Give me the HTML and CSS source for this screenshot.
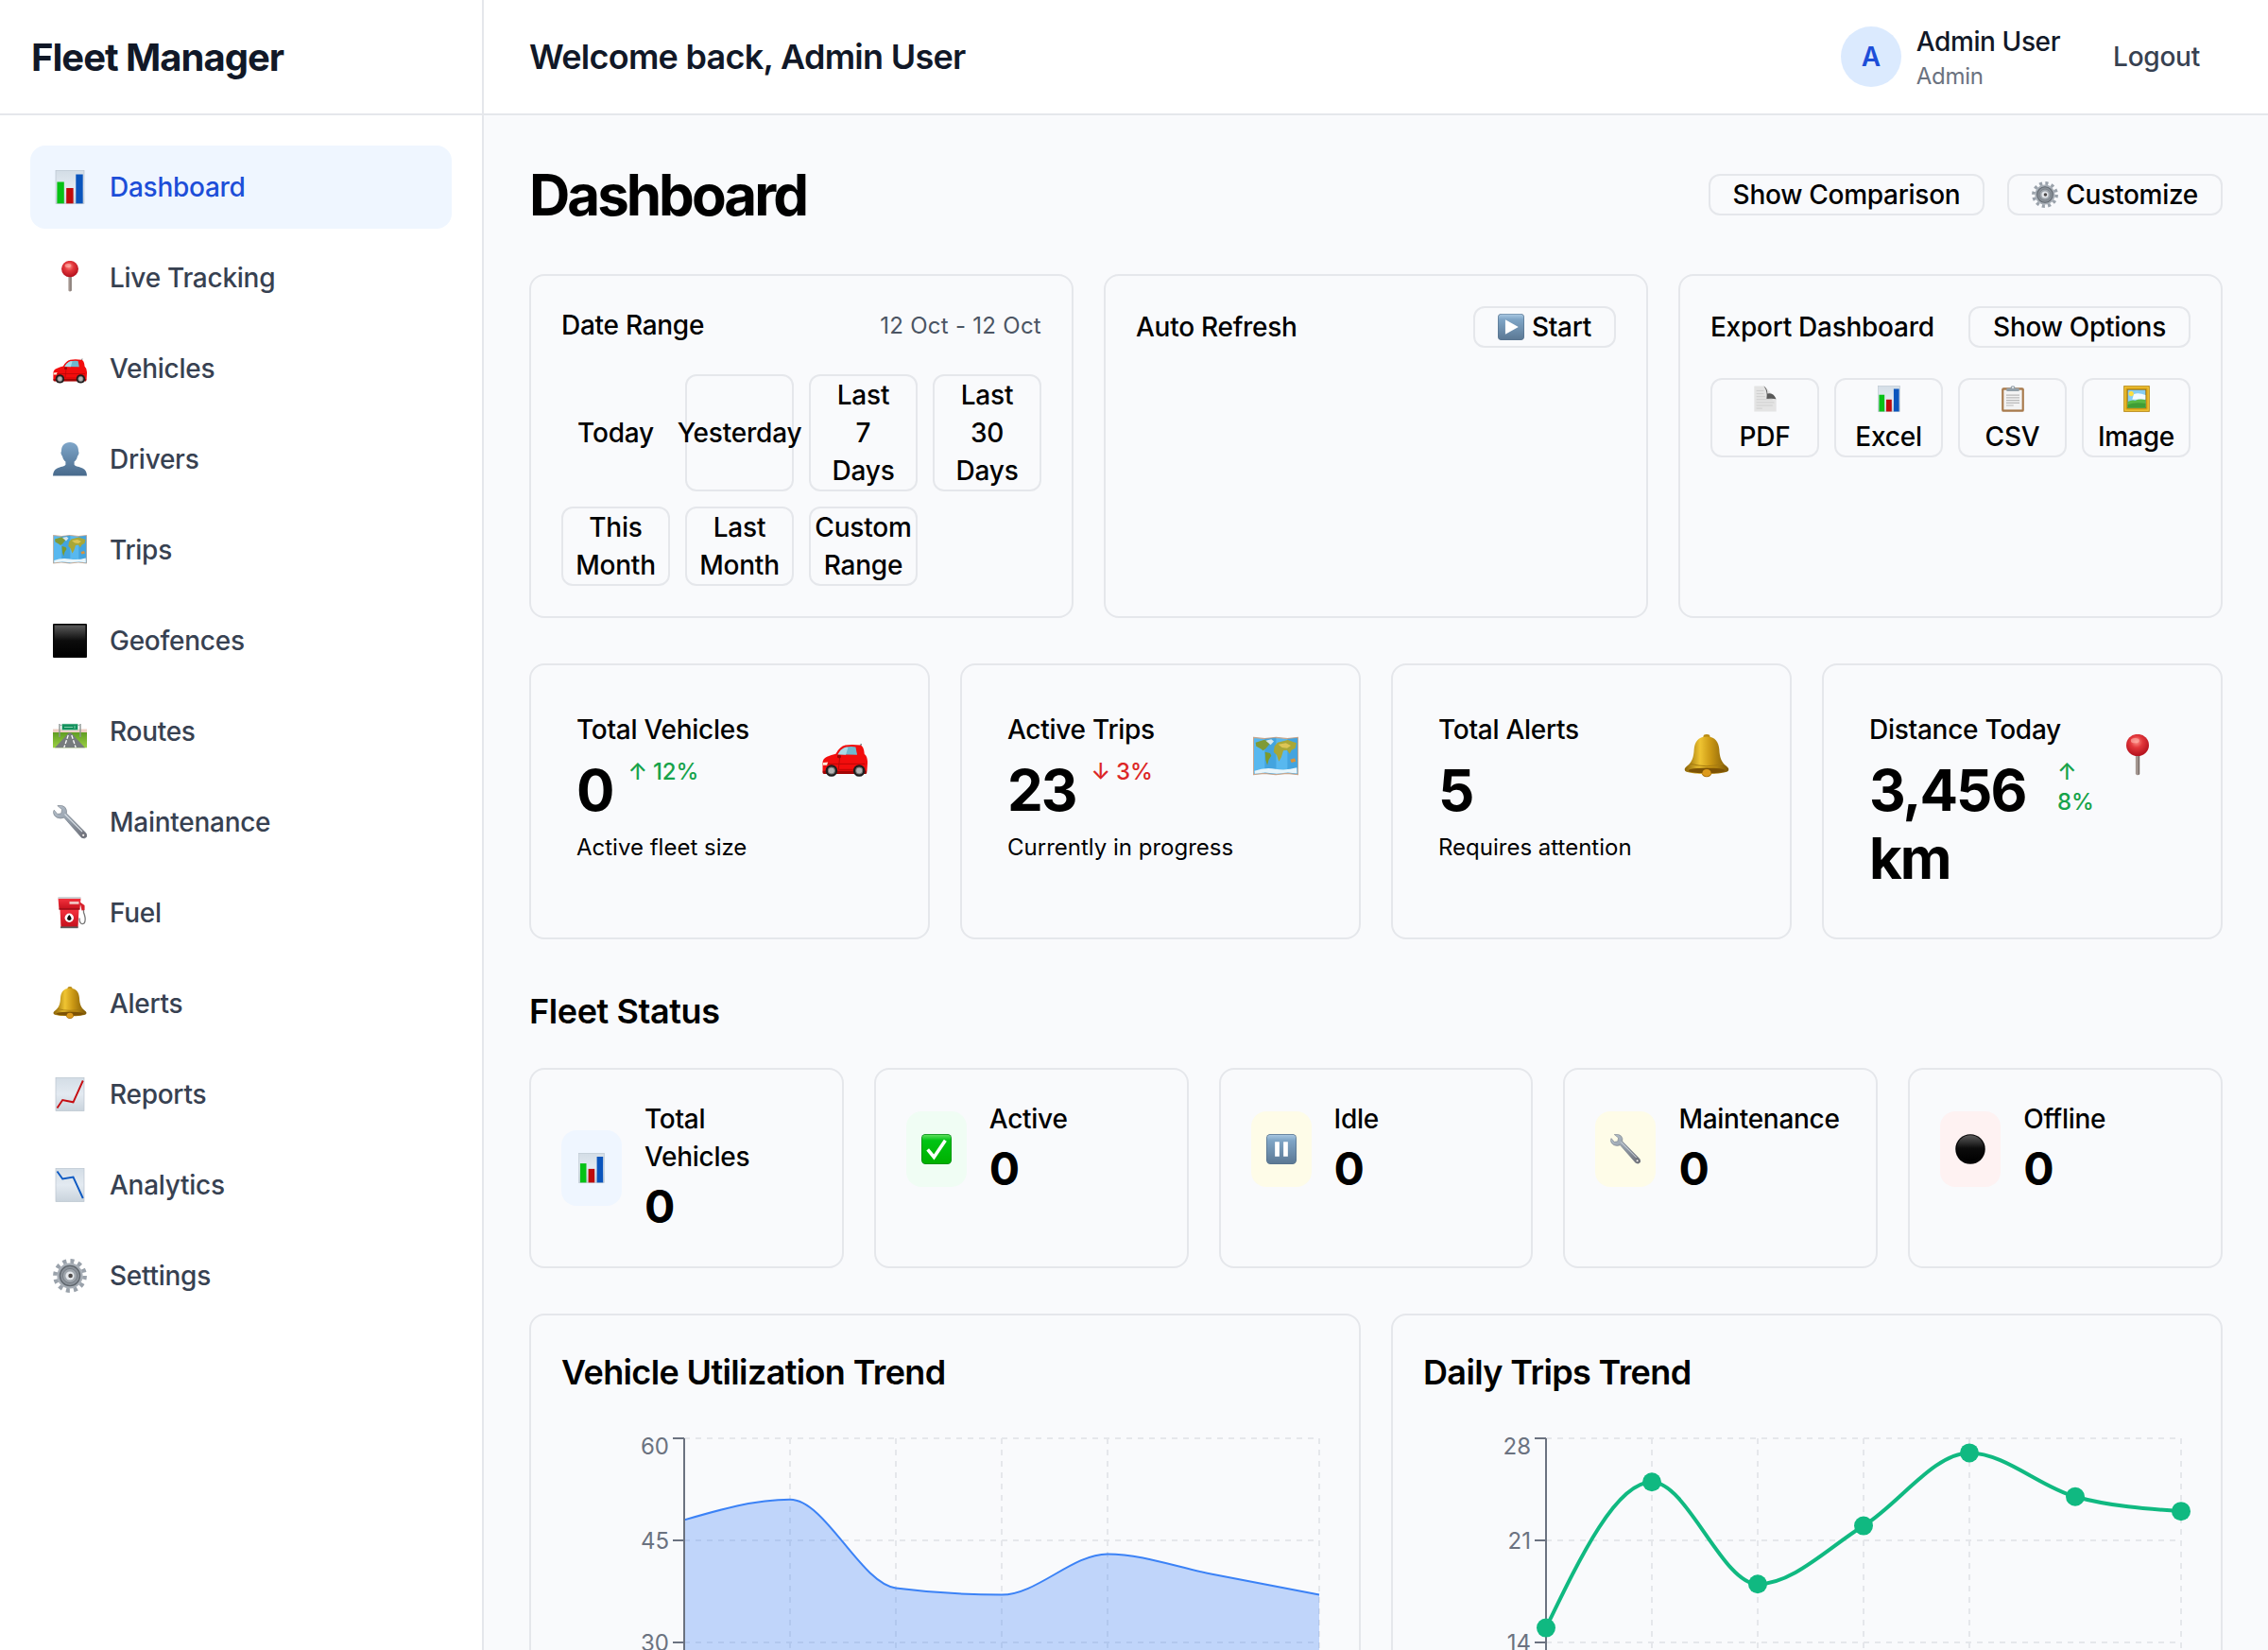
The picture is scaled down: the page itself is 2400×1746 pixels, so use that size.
FILE: index.html
```html
<!DOCTYPE html>
<html lang="en">
<head>
<meta charset="utf-8">
<title>Fleet Manager</title>
<link rel="stylesheet" href="styles.css">
</head>
<body>
<svg class="defs" width="0" height="0" aria-hidden="true">
  <defs>
    <linearGradient id="paper" x1="0" y1="0" x2="0" y2="1"><stop offset="0" stop-color="#d3dde6"/><stop offset=".5" stop-color="#e3eaf1"/><stop offset="1" stop-color="#c9d3dc"/></linearGradient>
    <linearGradient id="steel" x1="0" y1="0" x2="0" y2="1"><stop offset="0" stop-color="#a9c8e2"/><stop offset=".2" stop-color="#7fa5c6"/><stop offset="1" stop-color="#5b7894"/></linearGradient>
    <linearGradient id="person" x1="0" y1="0" x2="0" y2="1"><stop offset="0" stop-color="#7fa6c9"/><stop offset="1" stop-color="#486a8c"/></linearGradient>
    <linearGradient id="ink" x1="0" y1="0" x2="0" y2="1"><stop offset="0" stop-color="#5a5a5a"/><stop offset=".5" stop-color="#0c0c0c"/><stop offset="1" stop-color="#000"/></linearGradient>
    <linearGradient id="gold" x1="0" y1="0" x2="1" y2="0"><stop offset="0" stop-color="#8a6206"/><stop offset=".35" stop-color="#efc432"/><stop offset=".6" stop-color="#c99613"/><stop offset="1" stop-color="#7a5606"/></linearGradient>
    <linearGradient id="metal" x1="0" y1="0" x2="1" y2="1"><stop offset="0" stop-color="#b9c4cf"/><stop offset=".5" stop-color="#8e98a4"/><stop offset="1" stop-color="#6b6b74"/></linearGradient>
    <linearGradient id="green" x1="0" y1="0" x2="0" y2="1"><stop offset="0" stop-color="#5fe05f"/><stop offset=".2" stop-color="#00c414"/><stop offset="1" stop-color="#00b000"/></linearGradient>
    <linearGradient id="redbody" x1="0" y1="0" x2="0" y2="1"><stop offset="0" stop-color="#f5333f"/><stop offset="1" stop-color="#c30f1b"/></linearGradient>
    <radialGradient id="redball" cx=".45" cy=".35" r=".6"><stop offset="0" stop-color="#ff9088"/><stop offset=".45" stop-color="#e2373b"/><stop offset="1" stop-color="#b81420"/></radialGradient>
    <linearGradient id="grass" x1="0" y1="0" x2="0" y2="1"><stop offset="0" stop-color="#5f9d22"/><stop offset="1" stop-color="#9cd043"/></linearGradient>
  </defs>
  <symbol id="e-chart" viewBox="0 0 36 36">
    <rect x="3" y=".3" width="30" height="35.2" fill="url(#paper)" stroke="#b9c4ce" stroke-width=".7"/>
    <rect x="4.4" y="12.5" width="7.4" height="22.8" fill="#06c215"/><rect x="14.2" y="19" width="7.4" height="16.3" fill="#c00a0a"/><rect x="24.3" y="4.5" width="7.4" height="30.8" fill="#0a55bd"/>
  </symbol>
  <symbol id="e-pin" viewBox="0 0 36 36">
    <path d="M16.4 14h3.2v17.5q-1.6 2-3.2 0z" fill="#a39690"/><path d="M18.6 16h1v15.6l-1 .6z" fill="#766a66"/>
    <ellipse cx="18" cy="8.6" rx="9" ry="8.7" fill="url(#redball)"/><ellipse cx="16" cy="5" rx="3.4" ry="2" fill="#ffb4ac" opacity=".6"/>
  </symbol>
  <symbol id="e-car" viewBox="0 -1.5 36 36">
    <path d="M30 10l1-4" stroke="#555" stroke-width=".8"/>
    <path d="M.4 23q-.6-5 3.4-6.6 3.600-1.600 7-2.400 3.200-5.800 7.600-6.800 5-1 12 0 2.600.6 3.200 7 2.600 2 2.400 7.400l-.4 6q-.2 1.600-2 1.800L3 29.800q-2.400-.2-2.600-2.400z" fill="#f20d0d"/>
    <path d="M12.400 14.400q2.800-4.600 6.200-5.600 4-.8 8-.2l1.200 6.200z" fill="#6fb9cf"/><path d="M12.400 14.400q2.800-4.600 6.200-5.600h2l-1.800 6z" fill="#a9dbe6"/>
    <path d="M1 22h33M14 16.500l-1 10h13.500" stroke="#b80606" stroke-width=".7" fill="none"/>
    <path d="M.6 21l4-.4-.8 2.400H.6z" fill="#fbe9d8"/><path d="M.4 27.600h35v1.400q0 1-1 1H1.600q-1 0-1.200-1z" fill="#a40404"/>
    <rect x="12" y="15" width="3" height="2.400" rx="1" fill="#9c0505"/>
    <g fill="#1e1e1e"><circle cx="7.400" cy="27.400" r="4.700"/><circle cx="29.400" cy="27.400" r="4.700"/></g>
    <g fill="#b4b4b4" stroke="#777" stroke-width=".8"><circle cx="7.400" cy="27.400" r="2.600"/><circle cx="29.400" cy="27.400" r="2.600"/></g>
  </symbol>
  <symbol id="e-person" viewBox="0 0 36 36">
    <path d="M18 0c5.600 0 9 3.600 9 9 0 1 .8 1.400.4 3-.3 1.600-1.200 2-1.600 3.400-.6 2.400-1.800 3.800-3.200 5.200v3.200c1.400 2 5.400 2.200 8.800 3.600 3 1.300 4.400 3.800 4.600 8.200H0c.2-4.400 1.600-6.900 4.600-8.200 3.400-1.400 7.400-1.600 8.800-3.600v-3.200c-1.400-1.400-2.600-2.800-3.200-5.200-.4-1.400-1.300-1.800-1.600-3.400-.4-1.600.4-2 .4-3 0-5.400 3.400-9 9-9z" fill="url(#person)"/>
  </symbol>
  <symbol id="e-map" viewBox="0 0 36 36">
    <path d="M.3 2.500l9 1 9-1 9 1 8.400-1 .1 29.500-8.800-1-9 1-9-1-8.800 1z" fill="#58b8ef" stroke="#c9a68c" stroke-width=".9"/>
    <path d="M9.300 3.600l9-1V31.700l-9-1zM27.300 3.600l8-.7V31.500l-8-.9z" fill="#2e8fd0" opacity=".5"/>
    <path d="M1.200 29q8-3 16.500-1.500t17-1l.2 4.700-7.500-.8-9 .9-9-.9-8 .9z" fill="#e8f5fb"/>
    <path d="M2 6.500l6.500-2 5.500 1-1.500 3-2.500 3-2 1.500-2-1.500-3.500-2z" fill="#7f9a36"/><path d="M10 5l4.500-1 2 1.600-2.500 2.900z" fill="#d5e6ec"/>
    <path d="M9.500 14l4 1 1 2-2 3-1.200 4.500-1.300-4z" fill="#7c9a2c"/>
    <path d="M17 9.500l2.500-3 8-2 7 2.500-1 4-3 1.500-1.500 3-2-3-3 .5-1.500 5-2 3.500-1.700-5-2.500-2.500z" fill="#a8a737"/><path d="M20 8l6-1 4 2-3 2-4-.5z" fill="#dcc555"/><path d="M29.500 20l3.500-1 1 2.500-3.500 1z" fill="#d9933a"/>
  </symbol>
  <symbol id="e-square" viewBox="0 0 36 36">
    <rect width="36" height="36" rx="1" fill="#080808"/><rect x="1.600" y="1.600" width="32.800" height="32.800" fill="url(#ink)"/>
  </symbol>
  <symbol id="e-road" viewBox="0 0 36 36">
    <rect y="15.500" width="36" height="5" fill="#eecfc4"/><rect y="19" width="36" height="16.300" fill="url(#grass)"/>
    <path d="M16.800 19.500h2.400L34 35.300H2z" fill="#777b7d"/><path d="M16.200 22l-1 3-3.400 10M19.800 22l1 3 3.400 10" stroke="#fff" stroke-width="1.300" stroke-dasharray="4 1.500" fill="none"/>
    <path d="M7 10v14M29 10v14" stroke="#8c9592" stroke-width="1.400"/><path d="M7 11.500h22" stroke="#a9b2af" stroke-width="1"/>
    <rect x="9.500" y="10" width="17" height="6.600" rx=".6" fill="#12915d" stroke="#bfe3d2" stroke-width=".6"/><path d="M12 13.500h9M23 12v3" stroke="#8fd3b4" stroke-width=".9"/>
  </symbol>
  <symbol id="e-wrench" viewBox="0 0 36 36">
    <path d="M4.800.6q5-1.400 8 1.600 2.400 2.600 1.600 6.600L34 28.600q2.800 2.600 1.600 5-2 2.600-5.400.6L11.800 13.200q-3.600 1.600-7.400 0Q.6 11.400.4 7.400l.8-2.200 3.600 4.200 4-.6.800-4.200z" fill="url(#metal)" stroke="#6f7781" stroke-width=".6"/>
    <path d="M12.500 9.500L31 28" stroke="#d9dfe5" stroke-width="1.100"/><circle cx="32.200" cy="31.800" r="1.500" fill="#f4f4f4" stroke="#55555c" stroke-width=".6"/>
  </symbol>
  <symbol id="e-fuel" viewBox="0 0 36 36">
    <path d="M28.500 8l4 3.500v6q2.400 6 1.400 9.500-.8 3.400-3.500 2.500-2.500-1-2.300-6" fill="none" stroke="#777" stroke-width="1.300"/><path d="M28.500 6.500l5 3.500v5l-3 .5z" fill="#d81f2a"/>
    <path d="M7.500 14h20l-1 19.500H8.500z" fill="url(#redbody)"/><path d="M5.500 2.500h24l-1 12h-22z" fill="url(#redbody)"/>
    <path d="M5.500 1h24v2h-24z" fill="#cfd2d4"/><rect x="17.500" y="6" width="10" height="2.800" fill="#f0c2c0"/><path d="M6.500 14h22" stroke="#7e0a12" stroke-width=".9"/><rect x="8" y="32.400" width="18.600" height="1.800" fill="#5b5b5b"/>
    <circle cx="17.300" cy="23.300" r="4.700" fill="#fff"/><path d="M17.300 20q3 3.300 2 5-2 2-4 0-1-1.700 2-5z" fill="#111"/>
  </symbol>
  <symbol id="e-bell" viewBox="0 0 36 36">
    <ellipse cx="18" cy="1.700" rx="2.600" ry="1.700" fill="#b88a12"/><path d="M13.500 30h9q-1 4-4.500 4t-4.500-4z" fill="#a86f0b"/>
    <path d="M18 1.800c7 0 9.600 4.600 10 10.200.3 6 1.500 10 5.500 13.200 2 1.600 2.400 2.400 1.600 3.800-1.200 1.400-8 2.400-17.100 2.400S2.100 30.400.9 29c-.8-1.400-.4-2.200 1.600-3.800C6.500 22 7.700 18 8 12 8.400 6.400 11 1.800 18 1.800z" fill="url(#gold)"/>
    <ellipse cx="18" cy="28.800" rx="14.500" ry="2.200" fill="#7d5204"/><ellipse cx="18" cy="30.500" rx="3.400" ry="2.800" fill="#dd9a1c"/><path d="M5 23.500q13 3.600 26 0" stroke="#a67a10" fill="none" stroke-width=".8"/>
  </symbol>
  <symbol id="e-up" viewBox="0 0 36 36">
    <rect x="3" y=".3" width="30" height="35.200" fill="url(#paper)" stroke="#b9c4ce" stroke-width=".7"/>
    <path d="M4.500 32.500l5.700-8.500 11.300 2.300L31.800 3.500" stroke="#c60e12" stroke-width="1.900" fill="none"/>
  </symbol>
  <symbol id="e-down" viewBox="0 0 36 36">
    <rect x="3" y=".3" width="30" height="35.200" fill="url(#paper)" stroke="#b9c4ce" stroke-width=".7"/>
    <path d="M4.500 3.500l5.700 8 11.300-2L31.800 32" stroke="#0d59c2" stroke-width="1.900" fill="none"/>
  </symbol>
  <symbol id="e-gear" viewBox="0 0 36 36">
    <circle cx="18" cy="18" r="15.600" fill="none" stroke="#9aa2ab" stroke-width="4.600" stroke-dasharray="4 4.168"/>
    <circle cx="18" cy="18" r="13.600" fill="#a6adb5"/><circle cx="18" cy="18" r="10.600" fill="#8b929a" stroke="#5f666d" stroke-width="1.300"/><circle cx="18" cy="18" r="7.600" fill="#9ea5ac" stroke="#70767d" stroke-width=".8"/>
    <circle cx="18" cy="18" r="4.600" fill="#e4e8ec"/><circle cx="18.600" cy="18" r="2.300" fill="#4d4a4a"/>
  </symbol>
  <symbol id="e-play" viewBox="0 0 36 36">
    <rect width="36" height="36" rx="5" fill="#55718c"/><rect x=".8" y=".8" width="34.400" height="34.400" rx="4.500" fill="url(#steel)"/><path d="M10.200 8v20L28 18z" fill="#fff"/>
  </symbol>
  <symbol id="e-pause" viewBox="0 0 36 36">
    <rect width="36" height="36" rx="5" fill="#55718c"/><rect x=".8" y=".8" width="34.400" height="34.400" rx="4.500" fill="url(#steel)"/><path d="M10.300 9.300h5.300v17.400h-5.300zM20.400 9.300h5.300v17.400h-5.300z" fill="#fff"/>
  </symbol>
  <symbol id="e-check" viewBox="0 0 36 36">
    <rect width="36" height="36" rx="5" fill="#058a16"/><rect x=".8" y=".8" width="34.400" height="34.400" rx="4.500" fill="url(#green)"/><path d="M7.500 18.500l7.500 9L28.500 7.500" fill="none" stroke="#fff" stroke-width="4"/>
  </symbol>
  <symbol id="e-circle" viewBox="0 0 36 36">
    <circle cx="18" cy="18" r="17.700" fill="#050505"/><ellipse cx="18" cy="17" rx="16" ry="15.500" fill="url(#ink)"/>
  </symbol>
  <symbol id="e-doc" viewBox="0 0 36 36">
    <path d="M3 .5h14l16 17.500v17.500H3z" fill="#e4e4e4"/><path d="M6 7h10M6 11h10M6 15h12M6 19h22M6 23h24M6 27h22M6 31h8" stroke="#c9c9c9" stroke-width="1"/>
    <path d="M16 .5q5 3 5 10.500 8-2.500 11.800 7.400-5-1.400-13-.4Q21.500 8 16 .5z" fill="#595959"/>
  </symbol>
  <symbol id="e-clip" viewBox="0 0 36 36">
    <rect x="2.800" y="3" width="30.400" height="32.700" rx="2.400" fill="#a87a4c"/><rect x="5.600" y="6" width="24.800" height="26.700" fill="#f3f3f3"/>
    <path d="M9 13h18M9 16.500h18M9 20h18M9 23.500h18M9 27h10" stroke="#b9b9b9" stroke-width="1.600"/><path d="M9.500 3.500h5Q15 .3 18 .3t3.500 3.200h5v4.200h-17z" fill="#93a0a9"/><circle cx="18" cy="2.800" r="1.200" fill="#f9fafc"/>
  </symbol>
  <symbol id="e-picture" viewBox="0 0 36 36">
    <rect x=".4" y=".4" width="35.200" height="35.200" rx="1" fill="#d9a213" stroke="#9a6e08" stroke-width=".7"/><rect x="2.400" y="2.400" width="31.200" height="31.200" fill="none" stroke="#f5cf4a" stroke-width="1.200"/>
    <rect x="5.400" y="5.400" width="25.200" height="25.200" fill="#86cdf2" stroke="#8a6208" stroke-width=".9"/><path d="M14 12q6-3 16 1v6H12z" fill="#f3fafd"/><circle cx="10.500" cy="11" r="3.400" fill="#ffdf3c"/>
    <path d="M5.900 22q6-3 10-1.500 6-3 14.200-1v10.600H5.900z" fill="#58b944"/><path d="M5.900 26q10-4 24.200-1.500v5.600H5.900z" fill="#3f9e36"/>
  </symbol>
</svg>

<div class="app">
  <aside class="sidebar">
    <div class="brand"><span class="brand-name">Fleet Manager</span></div>
    <nav class="nav">
      <a class="nav-item active"><svg class="ico"><use href="#e-chart"/></svg><span>Dashboard</span></a>
      <a class="nav-item"><svg class="ico"><use href="#e-pin"/></svg><span>Live Tracking</span></a>
      <a class="nav-item"><svg class="ico"><use href="#e-car"/></svg><span>Vehicles</span></a>
      <a class="nav-item"><svg class="ico"><use href="#e-person"/></svg><span>Drivers</span></a>
      <a class="nav-item"><svg class="ico"><use href="#e-map"/></svg><span>Trips</span></a>
      <a class="nav-item"><svg class="ico"><use href="#e-square"/></svg><span>Geofences</span></a>
      <a class="nav-item"><svg class="ico"><use href="#e-road"/></svg><span>Routes</span></a>
      <a class="nav-item"><svg class="ico"><use href="#e-wrench"/></svg><span>Maintenance</span></a>
      <a class="nav-item"><svg class="ico"><use href="#e-fuel"/></svg><span>Fuel</span></a>
      <a class="nav-item"><svg class="ico"><use href="#e-bell"/></svg><span>Alerts</span></a>
      <a class="nav-item"><svg class="ico"><use href="#e-up"/></svg><span>Reports</span></a>
      <a class="nav-item"><svg class="ico"><use href="#e-down"/></svg><span>Analytics</span></a>
      <a class="nav-item"><svg class="ico"><use href="#e-gear"/></svg><span>Settings</span></a>
    </nav>
  </aside>

  <div class="page">
    <header class="topbar">
      <h2 class="welcome">Welcome back, Admin User</h2>
      <div class="account">
        <div class="user">
          <div class="avatar">A</div>
          <div><div class="user-name">Admin User</div><div class="user-role">Admin</div></div>
        </div>
        <button class="logout">Logout</button>
      </div>
    </header>

    <main class="content">
      <div class="title-row">
        <h1 class="title">Dashboard</h1>
        <div class="actions">
          <button class="btn">Show Comparison</button>
          <button class="btn"><svg class="ico-sm"><use href="#e-gear"/></svg>Customize</button>
        </div>
      </div>

      <section class="grid grid-3">
        <div class="card">
          <div class="card-head"><span class="label">Date Range</span><span class="range">12 Oct - 12 Oct</span></div>
          <div class="tiles">
            <button class="tile selected">Today</button>
            <button class="tile">Yesterday</button>
            <button class="tile">Last<br>7<br>Days</button>
            <button class="tile">Last<br>30<br>Days</button>
            <button class="tile">This<br>Month</button>
            <button class="tile">Last<br>Month</button>
            <button class="tile">Custom<br>Range</button>
          </div>
        </div>
        <div class="card">
          <div class="card-head"><span class="label">Auto Refresh</span><button class="btn"><svg class="ico-sm"><use href="#e-play"/></svg>Start</button></div>
        </div>
        <div class="card">
          <div class="card-head"><span class="label">Export Dashboard</span><button class="btn">Show Options</button></div>
          <div class="tiles">
            <button class="tile"><span class="tile-ico"><svg class="ico-sm"><use href="#e-doc"/></svg></span>PDF</button>
            <button class="tile"><span class="tile-ico"><svg class="ico-sm"><use href="#e-chart"/></svg></span>Excel</button>
            <button class="tile"><span class="tile-ico"><svg class="ico-sm"><use href="#e-clip"/></svg></span>CSV</button>
            <button class="tile"><span class="tile-ico"><svg class="ico-sm"><use href="#e-picture"/></svg></span>Image</button>
          </div>
        </div>
      </section>

      <section class="grid grid-4">
        <div class="card kpi">
          <div><div class="label">Total Vehicles</div>
            <div class="kpi-line"><span class="value">0</span><span class="trend up">↑ 12%</span></div>
            <div class="note">Active fleet size</div></div>
          <div class="kpi-ico"><svg class="ico-lg"><use href="#e-car"/></svg></div>
        </div>
        <div class="card kpi">
          <div><div class="label">Active Trips</div>
            <div class="kpi-line"><span class="value">23</span><span class="trend down">↓ 3%</span></div>
            <div class="note">Currently in progress</div></div>
          <div class="kpi-ico"><svg class="ico-lg"><use href="#e-map"/></svg></div>
        </div>
        <div class="card kpi">
          <div><div class="label">Total Alerts</div>
            <div class="kpi-line"><span class="value">5</span></div>
            <div class="note">Requires attention</div></div>
          <div class="kpi-ico"><svg class="ico-lg"><use href="#e-bell"/></svg></div>
        </div>
        <div class="card kpi">
          <div><div class="label">Distance Today</div>
            <div class="kpi-line"><span class="value wide">3,456<br>km</span><span class="trend up">↑<br>8%</span></div></div>
          <div class="kpi-ico"><svg class="ico-lg"><use href="#e-pin"/></svg></div>
        </div>
      </section>

      <h3 class="section-title">Fleet Status</h3>
      <section class="grid grid-5">
        <div class="card"><div class="status"><div class="badge blue"><svg class="ico-md"><use href="#e-chart"/></svg></div><div><div class="label">Total<br>Vehicles</div><div class="count">0</div></div></div></div>
        <div class="card"><div class="status"><div class="badge green"><svg class="ico-md"><use href="#e-check"/></svg></div><div><div class="label">Active</div><div class="count">0</div></div></div></div>
        <div class="card"><div class="status"><div class="badge amber"><svg class="ico-md"><use href="#e-pause"/></svg></div><div><div class="label">Idle</div><div class="count">0</div></div></div></div>
        <div class="card"><div class="status"><div class="badge amber"><svg class="ico-md"><use href="#e-wrench"/></svg></div><div><div class="label">Maintenance</div><div class="count">0</div></div></div></div>
        <div class="card"><div class="status"><div class="badge red"><svg class="ico-md"><use href="#e-circle"/></svg></div><div><div class="label">Offline</div><div class="count">0</div></div></div></div>
      </section>

      <section class="grid grid-2">
        <div class="card">
          <h3 class="chart-title">Vehicle Utilization Trend</h3>
          <svg class="chart" viewBox="0 0 812 600" width="812" height="600">
            <g class="gridlines"><path d="M130 10H802M130 118H802M130 226H802M130 334H802"/><path d="M130 10V442M242 10V442M354 10V442M466 10V442M578 10V442M802 10V442"/></g>
            <path class="area" d="M130 96.400C167.330 85.600 204.670 74.800 242 74.800C279.330 74.800 316.670 163.600 354 168.400C391.330 173.200 428.670 175.600 466 175.600C503.330 175.600 540.670 132.400 578 132.400C615.330 132.400 652.670 146.800 690 154C727.330 161.200 764.670 168.400 802 175.600V442H130Z"/>
            <path class="area-line" d="M130 96.400C167.330 85.600 204.670 74.800 242 74.800C279.330 74.800 316.670 163.600 354 168.400C391.330 173.200 428.670 175.600 466 175.600C503.330 175.600 540.670 132.400 578 132.400C615.330 132.400 652.670 146.800 690 154C727.330 161.200 764.670 168.400 802 175.600"/>
            <path class="axis" d="M130 10V442M118 10H130M118 118H130M118 226H130M118 334H130"/>
            <g class="ticks"><text x="114" y="27">60</text><text x="114" y="127">45</text><text x="114" y="235">30</text></g>
          </svg>
        </div>
        <div class="card">
          <h3 class="chart-title">Daily Trips Trend</h3>
          <svg class="chart" viewBox="0 0 812 600" width="812" height="600">
            <g class="gridlines"><path d="M130 10H802M130 118H802M130 226H802M130 334H802"/><path d="M130 10V442M242 10V442M354 10V442M466 10V442M578 10V442M802 10V442"/></g>
            <path class="axis" d="M130 10V442M118 10H130M118 118H130M118 226H130M118 334H130"/>
            <path class="trip-line" d="M130 210.570C167.330 133.430 204.670 56.290 242 56.290C279.330 56.290 316.670 164.290 354 164.290C391.330 164.290 428.670 125.710 466 102.570C503.330 79.430 540.670 25.430 578 25.430C615.330 25.430 652.670 61.420 690 71.710C727.330 82 764.670 84.570 802 87.140"/>
            <g class="dots"><circle cx="130" cy="210.570" r="10"/><circle cx="242" cy="56.290" r="10"/><circle cx="354" cy="164.290" r="10"/><circle cx="466" cy="102.570" r="10"/><circle cx="578" cy="25.430" r="10"/><circle cx="690" cy="71.710" r="10"/><circle cx="802" cy="87.140" r="10"/></g>
            <g class="ticks"><text x="114" y="27">28</text><text x="114" y="127">21</text><text x="114" y="235">14</text></g>
          </svg>
        </div>
      </section>
    </main>
  </div>
</div>
</body>
</html>
```

FILE: styles.css
```css
*, *::before, *::after { box-sizing: border-box; }
body { margin: 0; background: #f9fafc; font-family: Inter, "Liberation Sans", sans-serif; font-size: 28px; color: #000; }
h1, h2, h3 { margin: 0; }
button { font: inherit; color: inherit; background: none; border: 0; padding: 0; }
svg { display: block; }
.defs { position: absolute; }

.app { display: flex; height: 1746px; overflow: hidden; }
.sidebar { width: 512px; flex: none; background: #fff; border-right: 2px solid #e5e7eb; }
.brand { height: 122px; padding: 0 33px; display: flex; align-items: center; border-bottom: 2px solid #e5e7eb; }
.brand-name { font-size: 40px; font-weight: 700; color: #111827; letter-spacing: -1px; }
.nav { padding: 32px; display: flex; flex-direction: column; gap: 8px; }
.nav-item { height: 88px; padding: 0 24px; display: flex; align-items: center; gap: 24px; border-radius: 16px; font-size: 28px; font-weight: 500; letter-spacing: -.27px; color: #374151; }
.nav-item.active { background: #eff6ff; color: #1d4ed8; }
.ico { width: 36px; height: 36px; }
.ico-sm { width: 28px; height: 28px; }
.ico-md { width: 32px; height: 32px; }
.ico-lg { width: 48px; height: 48px; }

.page { flex: 1; min-width: 0; }
.topbar { height: 122px; padding: 0 48px; background: #fff; border-bottom: 2px solid #e5e7eb; display: flex; align-items: center; justify-content: space-between; }
.welcome { font-size: 36px; font-weight: 600; letter-spacing: -.72px; color: #111827; }
.account { display: flex; align-items: center; gap: 32px; }
.user { display: flex; align-items: center; gap: 16px; }
.avatar { width: 64px; height: 64px; border-radius: 50%; background: #dbeafe; color: #1d4ed8; font-size: 28px; font-weight: 600; display: flex; align-items: center; justify-content: center; }
.user-name { font-size: 28px; line-height: 40px; font-weight: 500; letter-spacing: -.4px; color: #111827; }
.user-role { font-size: 24px; line-height: 34px; margin-bottom: -2px; letter-spacing: -.3px; color: #6b7280; }
.logout { padding: 0 24px; font-size: 28px; line-height: 40px; font-weight: 500; letter-spacing: -.25px; color: #374151; }

.content { padding: 48px; display: flex; flex-direction: column; }
.title-row { display: flex; align-items: center; justify-content: space-between; height: 72px; margin-bottom: 48px; }
.title { font-size: 60px; line-height: 72px; font-weight: 700; letter-spacing: -3px; }
.actions { display: flex; gap: 24px; }
.btn { height: 44px; padding: 0 24px; border: 2px solid #e5e7eb; border-radius: 12px; font-size: 28px; line-height: 40px; font-weight: 500; letter-spacing: -.28px; display: flex; align-items: center; gap: 8px; white-space: nowrap; }

.grid { display: grid; gap: 32px; margin-bottom: 48px; }
.grid-2 { grid-template-columns: repeat(2, minmax(0, 1fr)); }
.grid-3 { grid-template-columns: repeat(3, minmax(0, 1fr)); }
.grid-4 { grid-template-columns: repeat(4, minmax(0, 1fr)); }
.grid-5 { grid-template-columns: repeat(5, minmax(0, 1fr)); }
.card { border: 2px solid #e5e7eb; border-radius: 16px; padding: 32px; }
.card-head { display: flex; align-items: center; justify-content: space-between; margin-bottom: 32px; }
.label { font-size: 28px; line-height: 40px; font-weight: 500; letter-spacing: -.27px; white-space: nowrap; }
.range { font-size: 24px; line-height: 34px; margin-bottom: -2px; letter-spacing: .27px; color: #4b5563; }
.tiles { display: grid; grid-template-columns: repeat(4, minmax(0, 1fr)); gap: 16px; }
.tile { border: 2px solid #e5e7eb; border-radius: 12px; font-size: 28px; line-height: 40px; font-weight: 500; letter-spacing: -.2px; display: flex; flex-direction: column; align-items: center; justify-content: center; white-space: nowrap; text-align: center; }
.tile.selected { border-color: transparent; }
.tile-ico { height: 40px; display: flex; align-items: center; }

.kpi { padding: 48px; display: flex; justify-content: space-between; align-items: flex-start; }
.kpi-line { display: flex; align-items: flex-start; gap: 16px; margin-top: 8px; }
.value { font-size: 60px; line-height: 72px; font-weight: 700; letter-spacing: -2px; }
.value.wide { width: 183px; }
.trend { font-size: 24px; line-height: 32px; padding-top: 1px; font-weight: 500; letter-spacing: -.2px; }
.up { color: #16a34a; }
.down { color: #dc2626; }
.note { font-size: 24px; line-height: 32px; margin-top: 9px; white-space: nowrap; }
.kpi-ico { padding: 25px 16px 23px; }

.section-title { font-size: 36px; line-height: 56px; font-weight: 600; letter-spacing: -.4px; margin-bottom: 32px; }
.status { display: flex; align-items: center; gap: 24px; }
.badge { width: 64px; height: 80px; border-radius: 16px; display: flex; align-items: center; justify-content: center; flex: none; }
.blue { background: #eff6ff; }
.green { background: #f0fdf4; }
.amber { background: #fefce8; }
.red { background: #fef2f2; }
.count { font-size: 48px; line-height: 66px; margin-bottom: -2px; font-weight: 700; }

.chart-title { font-size: 36px; line-height: 56px; font-weight: 600; letter-spacing: -.63px; margin-bottom: 32px; }
.gridlines path { stroke: #e5e7eb; stroke-width: 2; stroke-dasharray: 6 6; fill: none; }
.axis { stroke: #6b7280; stroke-width: 2; fill: none; }
.area { fill: #3b82f6; fill-opacity: .3; }
.area-line { fill: none; stroke: #3b82f6; stroke-width: 2; }
.trip-line { fill: none; stroke: #10b981; stroke-width: 4; }
.dots { fill: #10b981; }
.ticks { font-size: 24px; fill: #6b7280; text-anchor: end; }
```
